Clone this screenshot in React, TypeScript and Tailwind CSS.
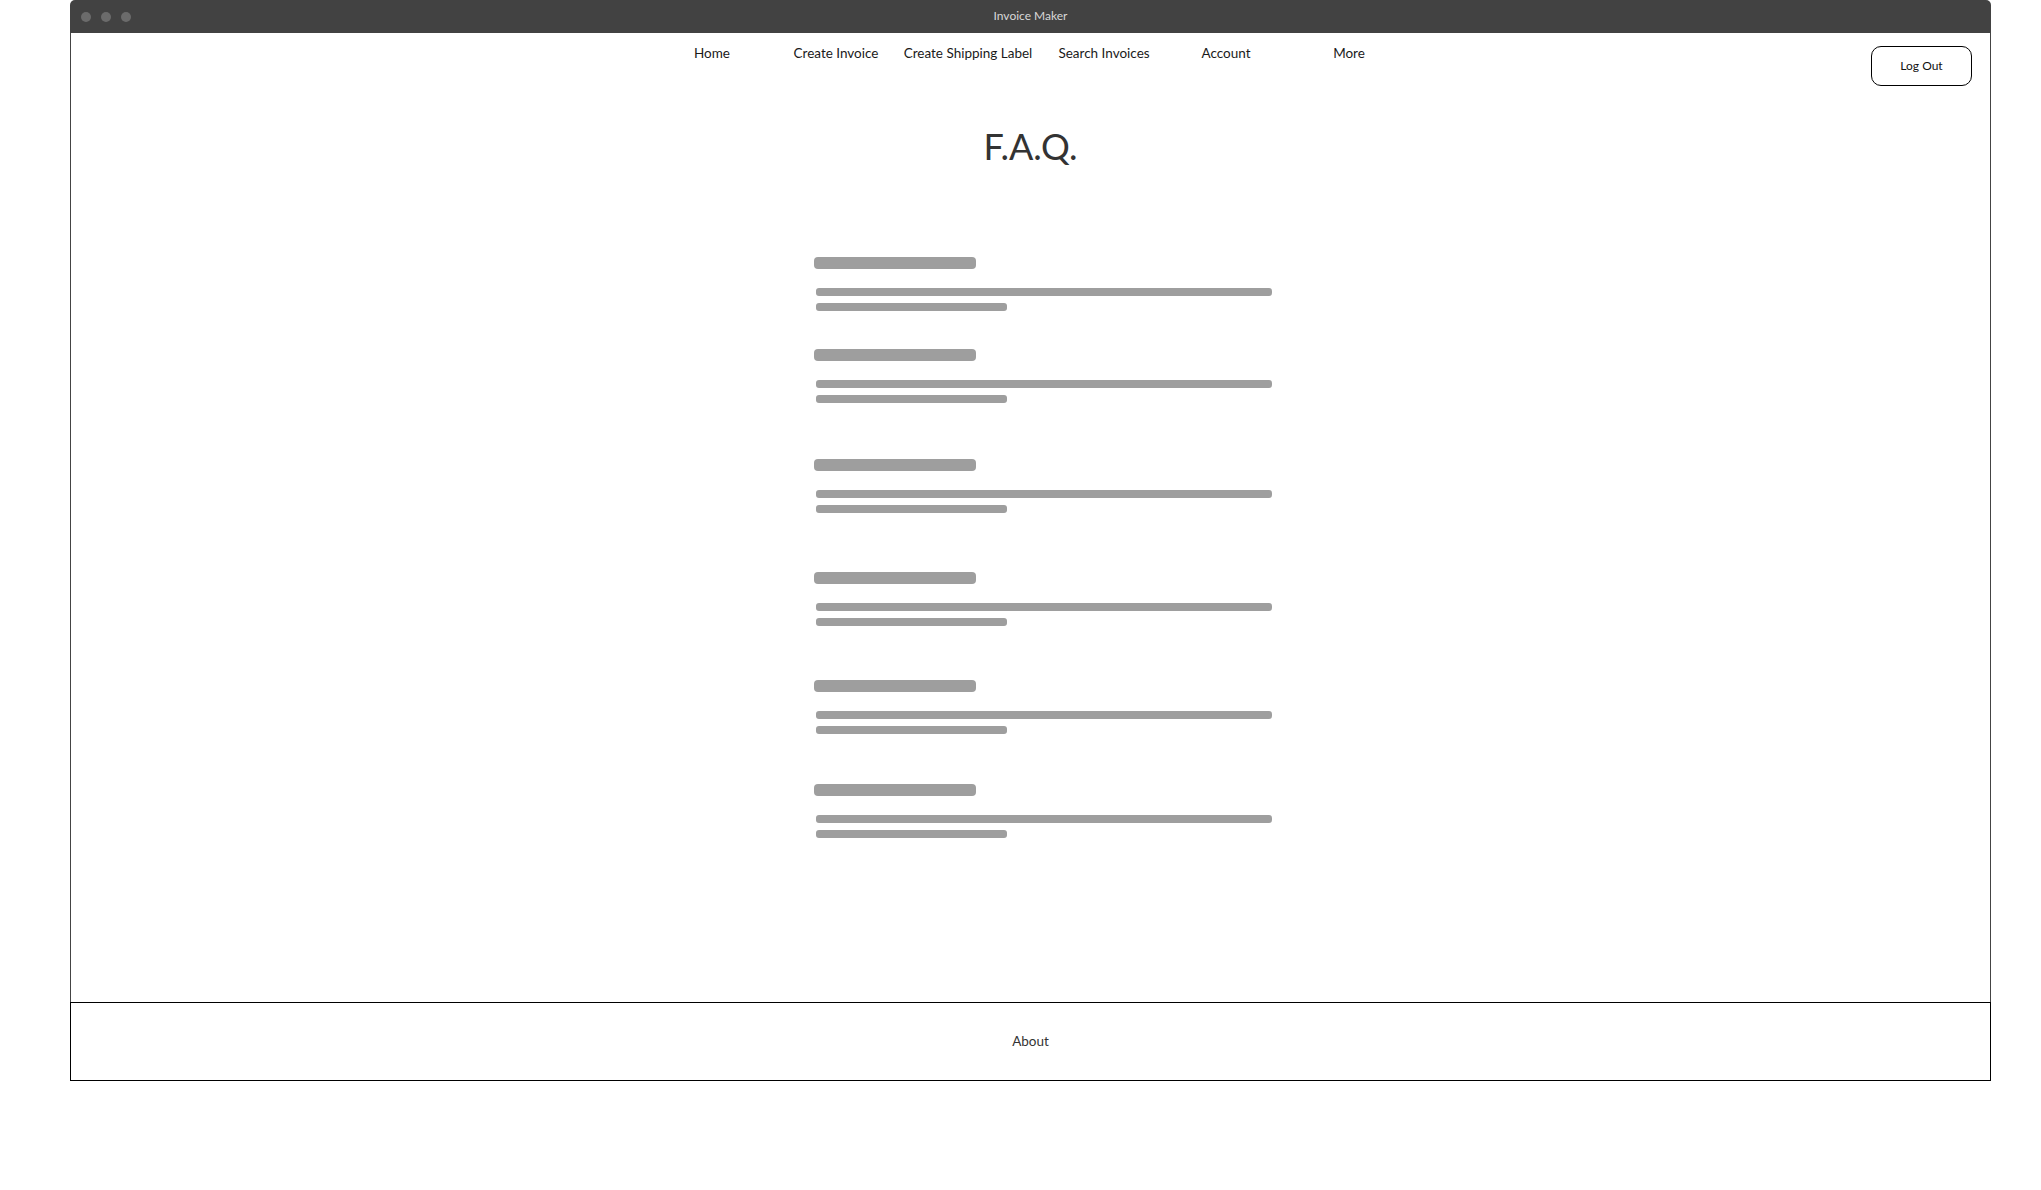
import React from 'react';

const navItems = [
  { label: 'Home', w: 'w-[124px]' },
  { label: 'Create Invoice', w: 'w-[124px]' },
  { label: 'Create Shipping Label', w: 'w-[140px]' },
  { label: 'Search Invoices', w: 'w-[132px]' },
  { label: 'Account', w: 'w-[112px]' },
  { label: 'More', w: 'w-[134px]' },
];

// gap before each question block, in px
const faqs = ['mt-0', 'mt-[38px]', 'mt-[56px]', 'mt-[59px]', 'mt-[54px]', 'mt-[50px]'];

const FaqSkeleton: React.FC<{ spacing: string }> = ({ spacing }) => (
  <div className={`${spacing} flex flex-col`}>
    <div className="h-[12px] w-[162px] rounded-[4px] bg-[#9e9e9e]" />
    <div className="ml-[2px] mt-[19px] h-[8px] w-[456px] rounded-[3px] bg-[#9e9e9e]" />
    <div className="ml-[2px] mt-[7px] h-[8px] w-[191px] rounded-[3px] bg-[#9e9e9e]" />
  </div>
);

export default function App() {
  return (
    <div className="min-h-[1190px] w-[2041px] bg-white pl-[70px] font-['Lato','Noto_Sans',sans-serif]">
      <div className="w-[1921px]">
        {/* title bar */}
        <div className="relative flex h-[33px] items-center rounded-t-[5px] bg-[#424242] pl-[11px]">
          <div className="flex gap-[10px]">
            <span className="h-[10px] w-[10px] rounded-full bg-[#6b6b6b]" />
            <span className="h-[10px] w-[10px] rounded-full bg-[#6b6b6b]" />
            <span className="h-[10px] w-[10px] rounded-full bg-[#6b6b6b]" />
          </div>
          <span className="absolute left-0 right-0 -mt-[2px] text-center text-[12px] text-[#d8d8d8]">Invoice Maker</span>
        </div>

        {/* page body */}
        <div className="flex h-[969px] flex-col border-x border-[#444444]">
          <div className="flex items-start">
            <div className="w-[579px] shrink-0" />
            <nav className="mt-[10px] flex">
              {navItems.map((item) => (
                <a key={item.label} className={`${item.w} text-center text-[13.5px] leading-[20px] text-[#1a1a1a]`}>
                  {item.label}
                </a>
              ))}
            </nav>
            <div className="flex-1" />
            <button className="mr-[18px] mt-[13px] h-[40px] w-[101px] rounded-[10px] border-[1.5px] border-black text-[12px] text-[#111]">
              Log Out
            </button>
          </div>

          <h1 className="mt-[39px] text-center text-[36px] leading-[43px] text-[#333333]">F.A.Q.</h1>

          <div className="ml-[743px] mt-[89px] flex flex-col">
            {faqs.map((s, i) => (
              <FaqSkeleton key={i} spacing={s} />
            ))}
          </div>
        </div>

        {/* footer */}
        <footer className="flex h-[79px] items-center justify-center border border-black">
          <span className="text-[13.5px] text-[#333333]">About</span>
        </footer>
      </div>
    </div>
  );
}
